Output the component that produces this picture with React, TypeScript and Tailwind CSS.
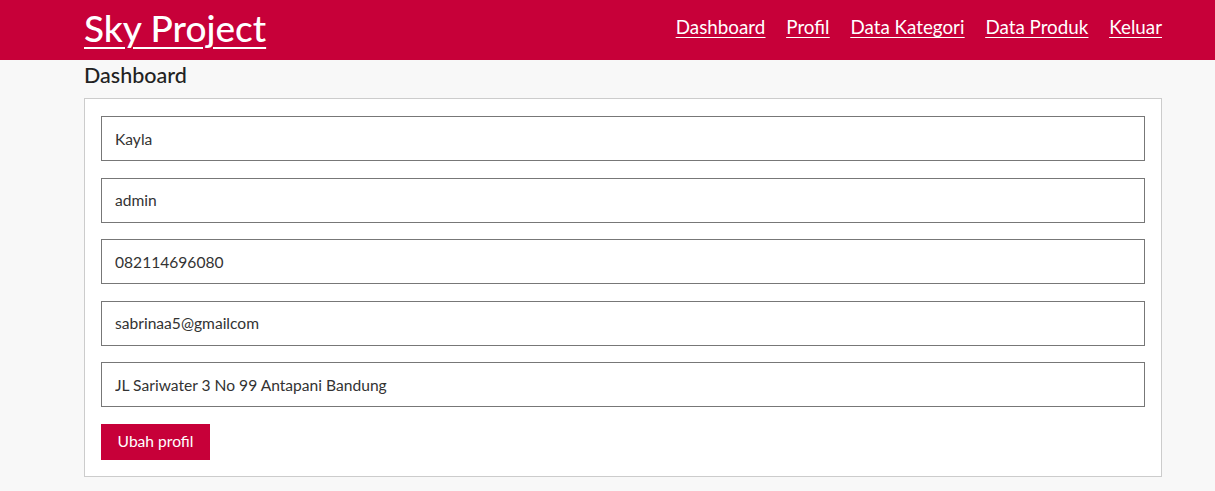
export default function App() {
  const fields = [
    "Kayla",
    "admin",
    "082114696080",
    "sabrinaa5@gmailcom",
    "JL Sariwater 3 No 99 Antapani Bandung",
  ];

  return (
    <div className="min-h-[491px] bg-[#f8f8f8] font-['Lato',sans-serif] text-[#222]">
      <header className="h-[60px] bg-[#c70039] text-white">
        <div className="ml-[84px] w-[1078px] h-full flex items-center justify-between pb-[5px]">
          <h1 className="text-[37px] font-medium underline underline-offset-[5px] decoration-2 leading-none">
            Sky Project
          </h1>
          <nav className="flex gap-[21px] text-[18.8px] underline underline-offset-[3px]">
            <a href="#">Dashboard</a>
            <a href="#">Profil</a>
            <a href="#">Data Kategori</a>
            <a href="#">Data Produk</a>
            <a href="#">Keluar</a>
          </nav>
        </div>
      </header>

      <div className="ml-[84px] w-[1078px]">
        <h3 className="text-[21.5px] font-medium pt-[2px] pb-[10px] leading-[26px]">Dashboard</h3>
        <div className="bg-white border border-[#ccc] px-[16px] pt-[17px] pb-[16px]">
          <form className="flex flex-col gap-[16.5px]">
            {fields.map((v) => (
              <input
                key={v}
                defaultValue={v}
                className="h-[45px] w-full border border-[#777] px-[13px] text-[15.6px] text-[#333] outline-none"
              />
            ))}
            <div>
              <button
                type="button"
                className="h-[36px] w-[109px] bg-[#c70039] text-white text-[15.6px]"
              >
                Ubah profil
              </button>
            </div>
          </form>
        </div>
      </div>
    </div>
  );
}
